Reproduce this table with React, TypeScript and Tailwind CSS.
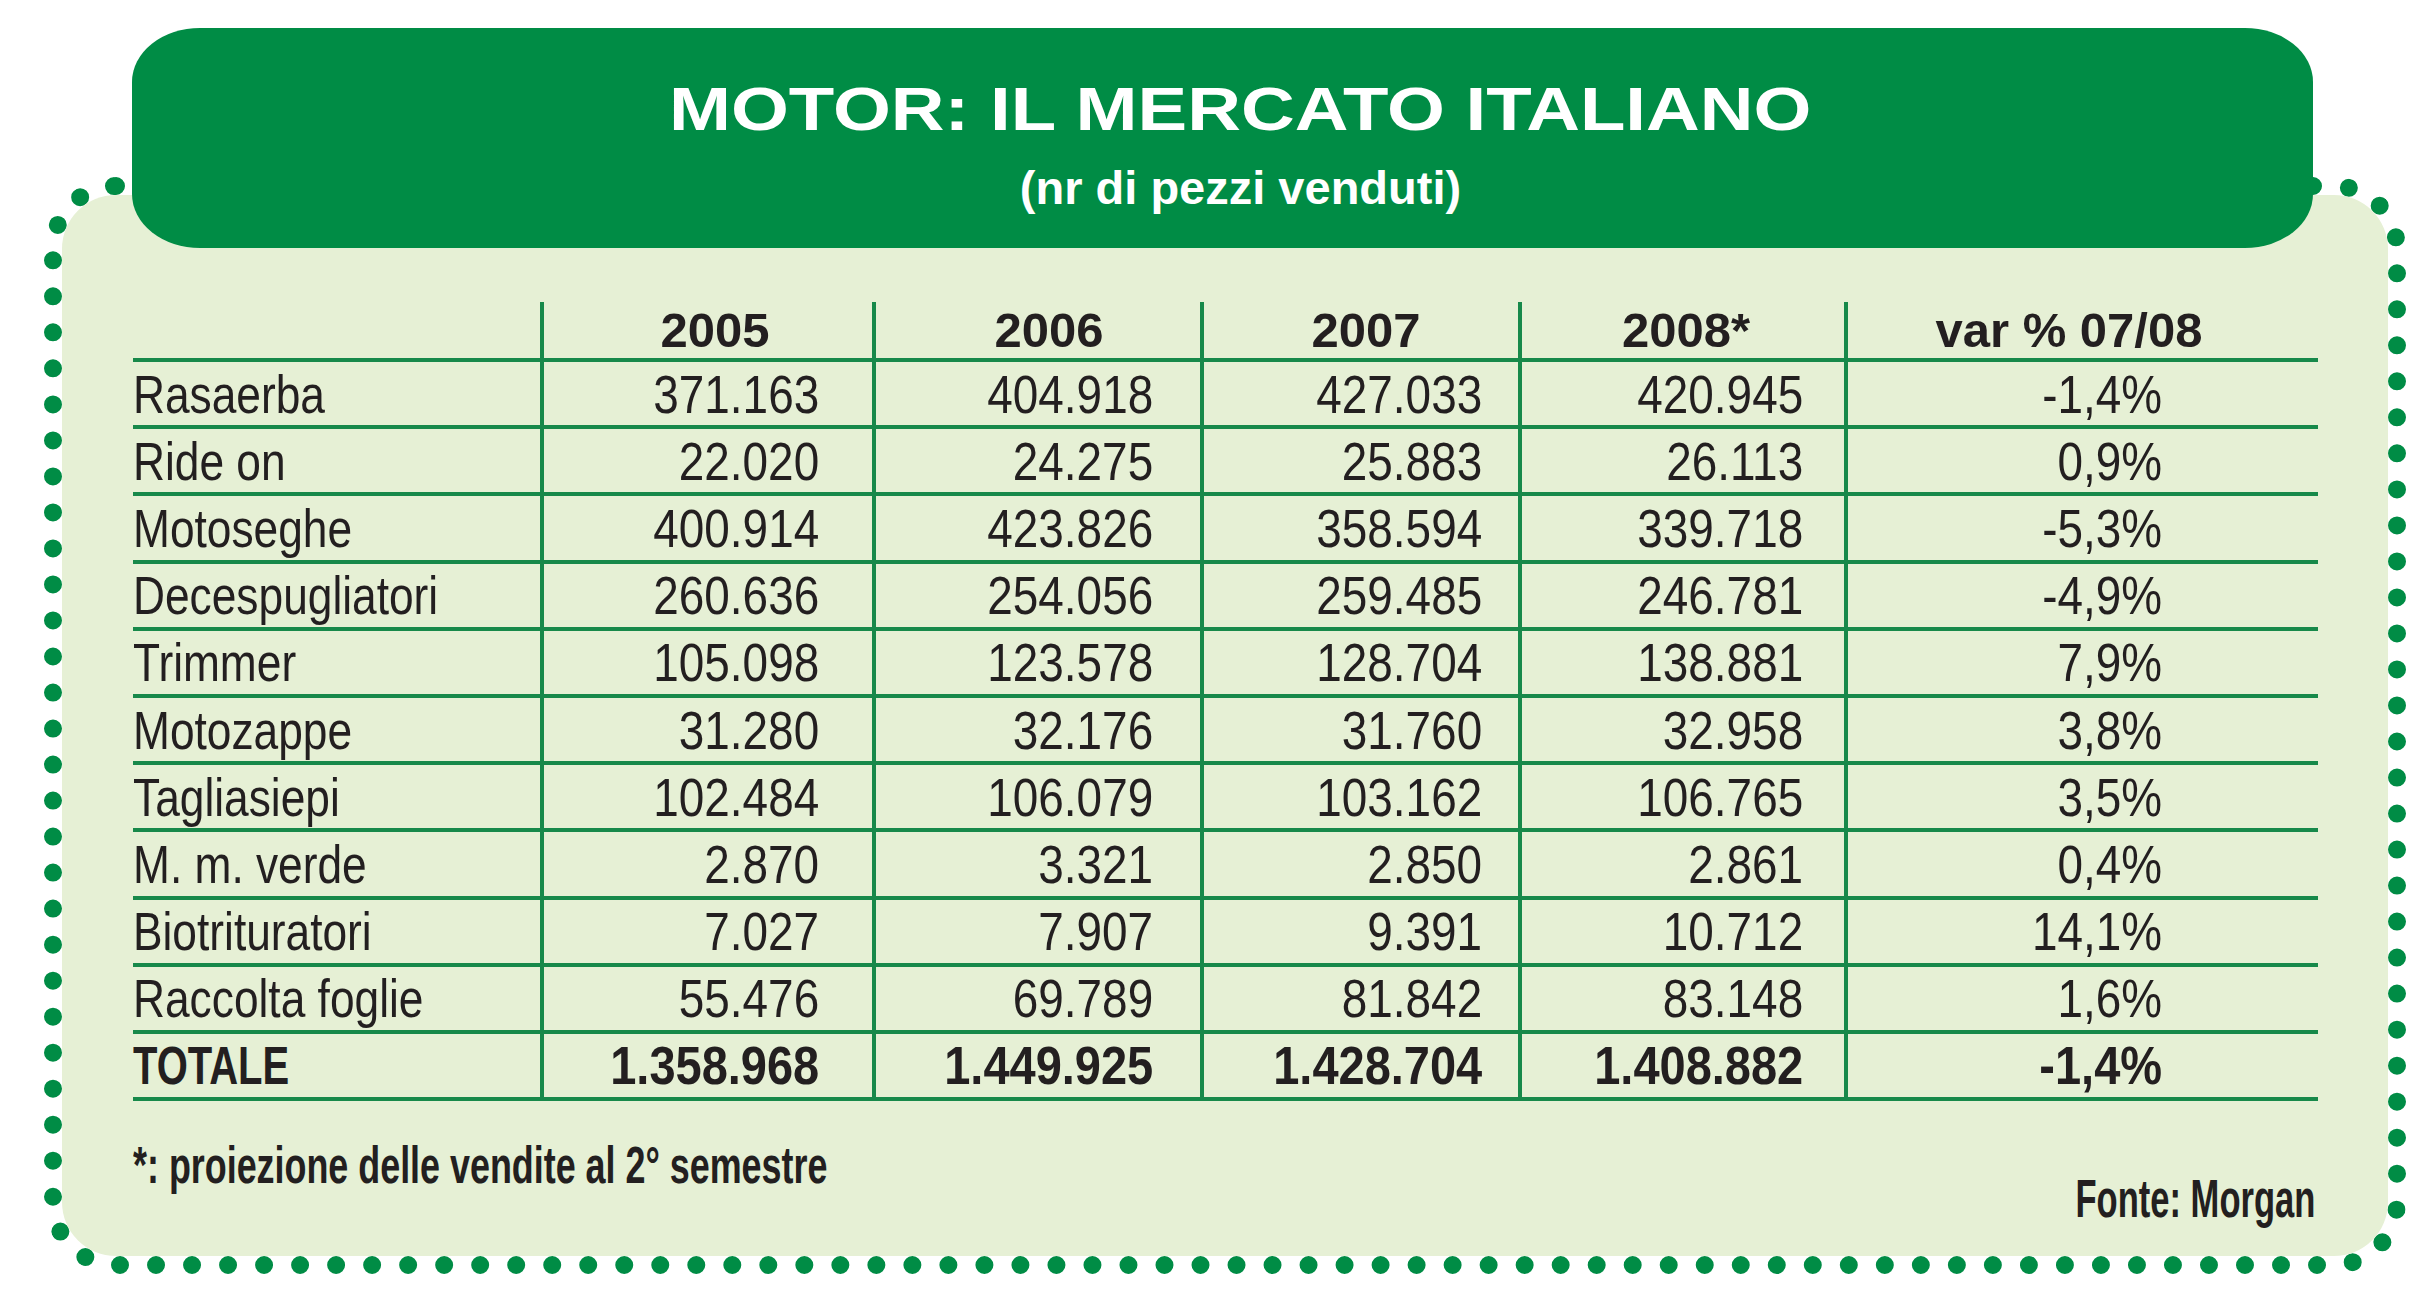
import React from 'react';

type Row = [string, string, string, string, string, string];

const rows: Row[] = [
  ['Rasaerba', '371.163', '404.918', '427.033', '420.945', '-1,4%'],
  ['Ride on', '22.020', '24.275', '25.883', '26.113', '0,9%'],
  ['Motoseghe', '400.914', '423.826', '358.594', '339.718', '-5,3%'],
  ['Decespugliatori', '260.636', '254.056', '259.485', '246.781', '-4,9%'],
  ['Trimmer', '105.098', '123.578', '128.704', '138.881', '7,9%'],
  ['Motozappe', '31.280', '32.176', '31.760', '32.958', '3,8%'],
  ['Tagliasiepi', '102.484', '106.079', '103.162', '106.765', '3,5%'],
  ['M. m. verde', '2.870', '3.321', '2.850', '2.861', '0,4%'],
  ['Biotrituratori', '7.027', '7.907', '9.391', '10.712', '14,1%'],
  ['Raccolta foglie', '55.476', '69.789', '81.842', '83.148', '1,6%'],
];

const total: Row = ['TOTALE', '1.358.968', '1.449.925', '1.428.704', '1.408.882', '-1,4%'];

const years = ['2005', '2006', '2007', '2008*', 'var % 07/08'];

// right padding of the numbers in each value column
const valuePad = ['pr-[53px]', 'pr-[47px]', 'pr-[36px]', 'pr-[41px]', 'pr-[156px]'];
// small shifts so the year headings sit where they do in print
const headPad = ['pl-[14px]', 'pl-[22px]', 'pl-[10px]', 'pl-[6px]', 'pr-[28px]'];

const grid = 'grid grid-cols-[407px_332px_328px_318px_326px_474px]';
const line = 'border-[#17894a]';

function TableRow({ row, bold }: { row: Row; bold?: boolean }) {
  return (
    <div className={`${grid} h-[67.2px] border-t-4 ${line} ${bold ? 'font-bold border-b-4 h-[71.2px]' : ''}`}>
      <div className="flex items-center">
        <span className={`inline-block origin-left whitespace-nowrap ${bold ? 'scale-x-[0.74]' : 'scale-x-[0.82]'}`}>
          {row[0]}
        </span>
      </div>
      {row.slice(1).map((v, i) => (
        <div key={i} className={`flex items-center justify-end border-l-4 ${line} ${valuePad[i]}`}>
          <span className={`inline-block origin-right whitespace-nowrap ${bold ? 'scale-x-[0.87]' : 'scale-x-[0.85]'}`}>
            {v}
          </span>
        </div>
      ))}
    </div>
  );
}

export default function App() {
  return (
    <div className="w-[2434px] h-[1307px] bg-white overflow-hidden pt-[28px] pl-[44px] text-[#231f20] font-['Liberation_Sans',Arial,sans-serif]">
      <div className="relative z-10 ml-[88px] w-[2181px] h-[220px] rounded-[68px/54px] bg-[#008c45] flex flex-col items-center pt-[51px] pl-[36px] text-white font-bold">
        <div className="text-[61px] leading-none whitespace-nowrap">
          <span className="inline-block scale-x-[1.22]">MOTOR: IL MERCATO ITALIANO</span>
        </div>
        <div className="mt-[24px] text-[47px] leading-none whitespace-nowrap">(nr di pezzi venduti)</div>
      </div>

      <div className="-mt-[71px] w-[2362px] h-[1097px] rounded-[72px] border-[18px] border-dotted border-[#008c45] bg-[#e6f0d5] bg-clip-padding pt-[107px] pl-[71px] pr-[70px]">
        <div className="text-[54px] leading-none">
          <div className={`${grid} h-[56px] font-bold text-[49px]`}>
            <div />
            {years.map((y, i) => (
              <div key={y} className={`flex items-center justify-center border-l-4 ${line} ${headPad[i]}`}>
                <span className="whitespace-nowrap">{y}</span>
              </div>
            ))}
          </div>
          {rows.map((r) => (
            <TableRow key={r[0]} row={r} />
          ))}
          <TableRow row={total} bold />
        </div>

        <div className="flex justify-between items-start mt-[38px] font-bold text-[52px] leading-none">
          <span className="inline-block origin-left scale-x-[0.69] whitespace-nowrap">
            *: proiezione delle vendite al 2° semestre
          </span>
          <span className="inline-block origin-right scale-x-[0.64] whitespace-nowrap mt-[32px] text-[54px] pr-[4px]">
            Fonte: Morgan
          </span>
        </div>
      </div>
    </div>
  );
}
